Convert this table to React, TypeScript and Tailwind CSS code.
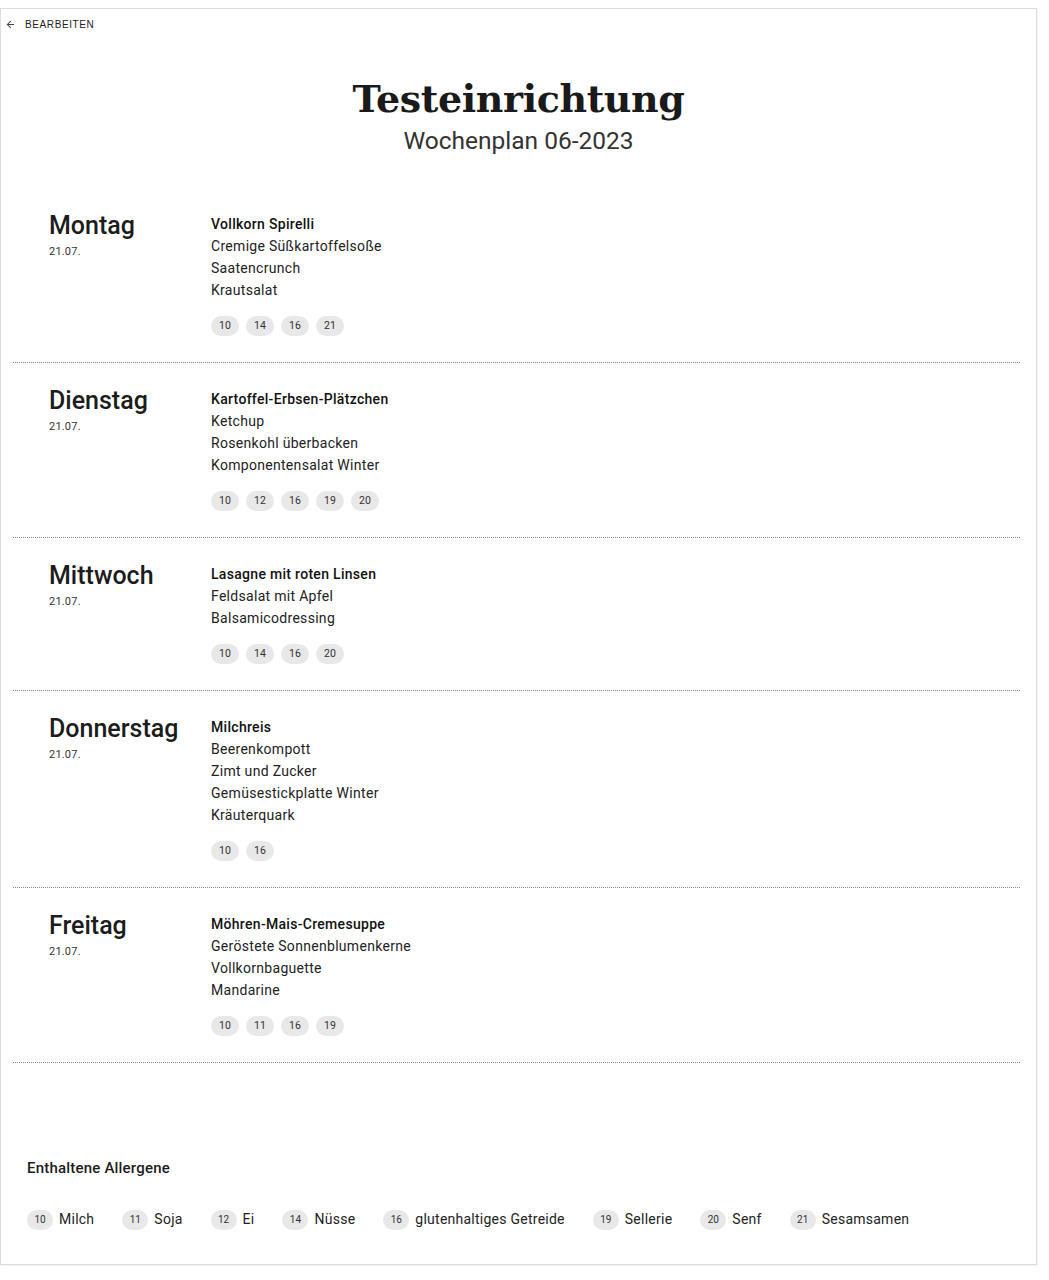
import { ArrowLeft } from "lucide-react";

const DAYS = [
  {
    name: "Montag",
    date: "21.07.",
    items: ["Vollkorn Spirelli", "Cremige Süßkartoffelsoße", "Saatencrunch", "Krautsalat"],
    allergens: ["10", "14", "16", "21"],
  },
  {
    name: "Dienstag",
    date: "21.07.",
    items: ["Kartoffel-Erbsen-Plätzchen", "Ketchup", "Rosenkohl überbacken", "Komponentensalat Winter"],
    allergens: ["10", "12", "16", "19", "20"],
  },
  {
    name: "Mittwoch",
    date: "21.07.",
    items: ["Lasagne mit roten Linsen", "Feldsalat mit Apfel", "Balsamicodressing"],
    allergens: ["10", "14", "16", "20"],
  },
  {
    name: "Donnerstag",
    date: "21.07.",
    items: ["Milchreis", "Beerenkompott", "Zimt und Zucker", "Gemüsestickplatte Winter", "Kräuterquark"],
    allergens: ["10", "16"],
  },
  {
    name: "Freitag",
    date: "21.07.",
    items: ["Möhren-Mais-Cremesuppe", "Geröstete Sonnenblumenkerne", "Vollkornbaguette", "Mandarine"],
    allergens: ["10", "11", "16", "19"],
  },
];

const LEGEND = [
  { id: "10", label: "Milch" },
  { id: "11", label: "Soja" },
  { id: "12", label: "Ei" },
  { id: "14", label: "Nüsse" },
  { id: "16", label: "glutenhaltiges Getreide" },
  { id: "19", label: "Sellerie" },
  { id: "20", label: "Senf" },
  { id: "21", label: "Sesamsamen" },
];

export default function App() {
  return (
    <div className="min-h-[1280px] bg-white font-['Roboto',sans-serif] text-[#222]">
      <div className="mt-2 w-[1037px] border border-[#dcdcdc] shadow-[1px_1px_2px_rgba(0,0,0,0.06)] pb-[34px]">
        {/* Back link */}
        <div className="flex items-center gap-[9px] pl-[4px] pt-[9px] h-[22px]">
          <ArrowLeft className="w-[11px] h-[11px] text-[#444]" strokeWidth={2.2} />
          <span className="text-[10px] leading-[12px] tracking-[0.6px] text-[#222] font-['Liberation_Sans',sans-serif]">
            BEARBEITEN
          </span>
        </div>

        {/* Header */}
        <div className="flex flex-col items-center mt-[44px]">
          <h1 className="font-['DejaVu_Serif',serif] font-bold text-[38px] leading-[48px] text-[#1a1a1a] tracking-[-0.4px]">
            Testeinrichtung
          </h1>
          <p className="text-[24.5px] leading-[28px] mt-[4px] text-[#333]">Wochenplan 06-2023</p>
        </div>

        {/* Week */}
        <div className="mt-[33px]">
          {DAYS.map((day) => (
            <div key={day.name} className="mr-[16px] ml-[12px] border-b border-dotted border-[#8a8a8a] pt-[25px] pb-[26px]">
              <div className="flex">
                <div className="w-[198px] pl-[36px] shrink-0">
                  <h2 className="text-[25px] leading-[26px] font-medium text-[#1c1c1c]">{day.name}</h2>
                  <p className="text-[11px] leading-[14px] mt-[6px] tracking-[0.2px] text-[#333]">{day.date}</p>
                </div>
                <div className="flex flex-col">
                  {day.items.map((item, i) => (
                    <span
                      key={item}
                      className={`text-[14px] leading-[22px] tracking-[0.3px] ${i === 0 ? "font-medium text-[#111]" : "text-[#222]"}`}
                    >
                      {item}
                    </span>
                  ))}
                  <div className="flex gap-[7px] mt-[15px]">
                    {day.allergens.map((a) => (
                      <span
                        key={a}
                        className="w-[28px] h-[20px] rounded-full bg-[#e8e8e8] flex items-center justify-center text-[10.5px] text-[#333]"
                      >
                        {a}
                      </span>
                    ))}
                  </div>
                </div>
              </div>
            </div>
          ))}
        </div>

        {/* Legend */}
        <div className="pl-[26px] mt-[94px]">
          <h3 className="text-[15px] leading-[22px] font-medium tracking-[0.2px] text-[#1c1c1c]">Enthaltene Allergene</h3>
          <div className="flex items-center gap-[28px] mt-[30px]">
            {LEGEND.map((l) => (
              <div key={l.id} className="flex items-center gap-[6px]">
                <span className="w-[26px] h-[20px] rounded-full bg-[#e8e8e8] flex items-center justify-center text-[10px] text-[#333]">
                  {l.id}
                </span>
                <span className="text-[14px] tracking-[0.25px] text-[#222]">{l.label}</span>
              </div>
            ))}
          </div>
        </div>
      </div>
    </div>
  );
}
